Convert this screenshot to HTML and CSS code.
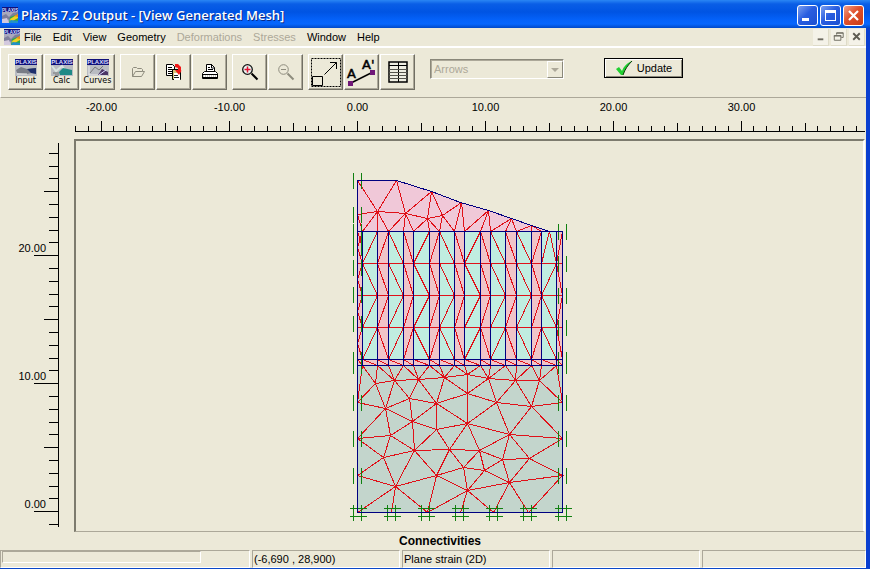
FILE: index.html
```html
<!DOCTYPE html>
<html lang="en">
<head>
<meta charset="utf-8">
<title>Plaxis 7.2 Output</title>
<link rel="stylesheet" href="styles.css">
</head>
<body>
<svg class="defs" aria-hidden="true">
  <defs>
    <symbol id="app" viewBox="0 0 16 16">
      <rect width="16" height="16" fill="#a9a9bd"/>
      <rect width="16" height="5" fill="#10107a"/>
      <text class="brand" x="8" y="4.500" text-anchor="middle" font-size="4.500">PLAXIS</text>
      <path d="M0 9l4-2 3 3 4-4 5-1v3l-7 4-9 2z" fill="#7d7d9c"/>
      <path d="M0 12l5-1 2 5H0z" fill="#d3c9de"/>
      <path d="M7 16l1-6 8-3v9z" fill="#2fa84a"/>
      <path d="M8 12l8-5v4l-7 4z" fill="#f0d022"/>
      <path d="M12 9l4-2v3z" fill="#f2841c"/>
      <path d="M7 16l2-3 7 1v2z" fill="#2190c8"/>
    </symbol>
    <symbol id="plx" viewBox="0 0 22 17">
      <rect width="22" height="17" fill="#b9bcc2"/>
      <rect width="22" height="6" fill="#10107a"/>
      <text class="brand" x="11" y="5.200" text-anchor="middle" font-size="6">PLAXIS</text>
    </symbol>
  </defs>
</svg>
<div class="window">
  <header class="titlebar">
    <svg class="appicon"><use href="#app"/></svg>
    <h1>Plaxis 7.2 Output - [View Generated Mesh]</h1>
    <button class="cap" aria-label="Minimize"><svg viewBox="0 0 19 19"><path d="M4 12h7v3H4z" fill="#fff"/></svg></button>
    <button class="cap" aria-label="Maximize"><svg viewBox="0 0 19 19"><path d="M4 4h11v11H4zM5 7v7h9V7z" fill="#fff" fill-rule="evenodd"/></svg></button>
    <button class="cap close" aria-label="Close"><svg viewBox="0 0 19 19"><path d="M5 5l9 9M14 5l-9 9" stroke="#fff" stroke-width="2.2"/></svg></button>
  </header>
  <nav class="menubar">
    <svg class="appicon"><use href="#app"/></svg>
    <button>File</button><button>Edit</button><button>View</button><button>Geometry</button><button disabled>Deformations</button><button disabled>Stresses</button><button>Window</button><button>Help</button>
    <span class="mdi">
      <button aria-label="Minimize view"><svg viewBox="0 0 16 16"><path d="M5 10h6v2H5z" fill="#6d6b60"/></svg></button>
      <button aria-label="Restore view"><svg viewBox="0 0 16 16"><path d="M6 6V4h7v5h-2M6 4.500h7M3.500 7h7v5h-7zM3 7.500h8" stroke="#6d6b60" fill="none"/></svg></button>
      <button aria-label="Close view"><svg viewBox="0 0 16 16"><path d="M4.500 4.500l7 7M11.500 4.500l-7 7" stroke="#5d5b52" stroke-width="2"/></svg></button>
    </span>
  </nav>
  <div class="toolbar">
    <div class="group">
      <button class="tool"><svg width="22" height="17"><use href="#plx"/><path d="M1 11l5-3 6 2 9-1v4l-9 2-10-1z" fill="#787c86"/><path d="M12 10l9-1v6l-5-1z" fill="#20306c"/><path d="M2 15h10" stroke="#e8e8e8"/></svg>Input</button>
      <button class="tool"><svg width="22" height="17"><use href="#plx"/><path d="M1 7l4 5 6-5 4 6" stroke="#d8e4e0" fill="none" stroke-width="2"/><path d="M8 13l4-4 9 2v5H9z" fill="#1f8a86"/><path d="M2 14h6M4 16h4" stroke="#777"/></svg>Calc</button>
      <button class="tool"><svg width="22" height="17"><use href="#plx"/><path d="M2 7v9h18" stroke="#eee" fill="none"/><path d="M3 14l5-6 4 3 4-4" stroke="#777" fill="none"/><path d="M11 16l4-6 6 3v3z" fill="#4b3565"/><path d="M12 16l7-5" stroke="#d8d8ff"/></svg>Curves</button>
    </div>
    <div class="group">
      <button class="tool" aria-label="Open" disabled><svg width="16" height="14" viewBox="0 0 16 14"><path d="M2.500 11.500h9l3-5h-2v-2l-1-1h-4l-1-1h-3l-1 1v8l3-5h7" stroke="#8e8c7e" fill="none"/></svg></button>
      <button class="tool" aria-label="Copy"><svg width="18" height="18" viewBox="0 0 18 18"><path d="M1.500 1.500h6l2 2v9h-8z" fill="#fff" stroke="#000"/><path d="M3 4.500h4M3 6.500h5M3 8.500h5M3 10.500h4" stroke="#000"/><path d="M7.500 6.500h8v10h-8z" fill="#d6c37a" stroke="#000"/><path d="M9 10h6v7H9z" fill="#fff"/><path d="M9 12.500h4M9 14.500h5" stroke="#222"/><path d="M10 1h3l3 3v4l1-1-3 5-4-5h3V5l-3-1z" fill="#f01818"/></svg></button>
      <button class="tool" aria-label="Print"><svg width="18" height="18" viewBox="0 0 18 18"><path d="M5.500 8.500v-7h5l3 3v4" fill="#fff" stroke="#000"/><path d="M10.500 1v4h3M7 4.500h2M7 6.500h5" stroke="#000" fill="none"/><path d="M3.500 8.500h11l2 2v5h-15v-5z" fill="#fff" stroke="#000"/><path d="M2 11.500h14M2 14.500h14M4 8.500h10" stroke="#000"/><path d="M2 13h14" stroke="#99988c" stroke-dasharray="1 1"/></svg></button>
    </div>
    <div class="group">
      <button class="tool" aria-label="Zoom in"><svg width="18" height="18" viewBox="0 0 18 18"><circle cx="6.500" cy="6.500" r="4.800" fill="#e8f4f0" stroke="#111" stroke-width="1.300"/><path d="M3.500 6.500h6M6.500 3.500v6" stroke="#e01030" stroke-width="1.500"/><path d="M10.500 10.500l6 6" stroke="#000" stroke-width="2"/></svg></button>
      <button class="tool" aria-label="Zoom out" disabled><svg width="18" height="18" viewBox="0 0 18 18"><circle cx="6.500" cy="6.500" r="4.800" fill="none" stroke="#8e8c7e"/><path d="M4 6.500h5" stroke="#8e8c7e"/><path d="M10.500 10.500l6 6" stroke="#8e8c7e" stroke-width="2"/></svg></button>
    </div>
    <div class="group">
      <button class="tool" aria-label="Scale"><svg width="30" height="29" viewBox="0 0 30 29"><path d="M.500 .500h29v28H.500z" fill="none" stroke="#000" stroke-dasharray="2 1"/><path d="M1.500 18.500h10v9h-10zM13.500 16.500l12-12M19 4.500h6.500V11" fill="none" stroke="#000"/></svg></button>
      <button class="tool" aria-label="Cross section"><svg class="section" width="30" height="29" viewBox="0 0 30 29"><text class="mark" x="0" y="20">A</text><text class="mark" x="15" y="11">A'</text><path d="M4 25l22-11" stroke="#000" stroke-width="1.500"/><path d="M1 23h5v5H1zM23 12h5v5h-5z" fill="#701878"/></svg></button>
      <button class="tool" aria-label="Table"><svg width="20" height="22" viewBox="0 0 20 22"><path d="M1 1h18v20H1z" fill="#efeee2" stroke="#000" stroke-width="1.500"/><path d="M1 4.500h18M10.500 1v20" stroke="#000"/><path d="M1 8.500h18M1 11.500h18M1 14.500h18M1 17.500h18" stroke="#55544c"/></svg></button>
    </div>
    <div class="combo">
      <select aria-label="Display type" disabled><option>Arrows</option></select><span class="drop"></span>
    </div>
    <button class="update"><svg width="18" height="16" viewBox="0 0 18 16"><path d="M1 9l3-2 3 4c2-5 5-8 10-10-4 4-7 8-9 14H6z" fill="#20d030"/><path d="M8 15c2-6 5-10 9-14" stroke="#083a08" fill="none"/></svg>Update</button>
  </div>
  <main class="workspace">
    <svg class="ruler-x" id="rulerX" role="img" aria-label="Horizontal ruler"></svg>
    <svg class="ruler-y" id="rulerY" role="img" aria-label="Vertical ruler"></svg>
    <div class="canvas"><svg id="mesh" role="img" aria-label="Generated mesh"></svg></div>
  </main>
  <p class="caption">Connectivities</p>
  <footer class="statusbar">
    <div class="cell"><span class="progress"></span></div>
    <div class="cell">(-6,690 , 28,900)</div>
    <div class="cell">Plane strain (2D)</div>
    <div class="cell"></div>
    <div class="cell"></div>
  </footer>
</div>
<script src="mesh.js"></script>
</body>
</html>
```
FILE: mesh.js
```js
const UNIT = 12.8;

// Rulers: one tick per metre, longer at 5, longest and labelled at 10.
function tickSize(n, sizes) {
  return n % 10 === 0 ? sizes[2] : n % 5 === 0 ? sizes[1] : sizes[0];
}

let out = '<line x1="1" y1="33.5" x2="100%" y2="33.5"/>';
for (let n = -22; n <= 39; n++) {
  const x = Math.floor(283 + n * UNIT) + 0.5;
  out += `<line x1="${x}" x2="${x}" y1="${33 - tickSize(n, [5, 8, 10])}" y2="33"/>`;
  if (n % 10 === 0) out += `<text x="${x}" y="13" text-anchor="middle">${n.toFixed(2)}</text>`;
}
document.getElementById('rulerX').innerHTML = out;

out = '<line x1="58.5" x2="58.5" y1="4" y2="388"/>';
for (let n = -1; n <= 28; n++) {
  const y = Math.floor(372.6 - n * UNIT) + 0.5;
  out += `<line x1="${58 - tickSize(n, [9, 14, 24])}" x2="58" y1="${y}" y2="${y}"/>`;
  if (n % 10 === 0) out += `<text x="46" y="${y - 4}" text-anchor="end">${n.toFixed(2)}</text>`;
}
document.getElementById('rulerY').innerHTML = out;

// Mesh
const xs = [357, 362, 377, 388, 403, 413, 429, 439, 454, 464, 480, 490, 505, 516, 531, 541, 556, 562];
const cols = xs.slice(1, 17);
const rows = [231, 263, 295, 327, 359, 365];
const seg = (a, b) => `M${a[0]} ${a[1]}L${b[0]} ${b[1]}`;

let fills = '<path fill="#f0c8d8" d="M357 180H396L431 191L460 202L488 210L511 218L549 231H357z"/>';
fills += '<path fill="#f0c4c8" d="M357 231H562V365H357z"/>';
for (let i = 0; i < 15; i += 2) {
  const w = cols[i + 1] - cols[i];
  fills += `<rect fill="#c0ede0" x="${cols[i]}" y="231" width="${w}" height="128"/>`;
}
fills += '<path fill="#c3d5cc" d="M357 365H562V512H357z"/>';

// Straight lines on the grid are one-pixel rectangles
let redBars = '';
for (const y of rows.slice(1, 4)) redBars += `<rect x="357" y="${y}" width="206" height="1"/>`;
let blueBars = '';
for (const x of cols) blueBars += `<rect x="${x}" y="231" width="1" height="135"/>`;
for (const y of [231, 359, 365, 512]) blueBars += `<rect x="357" y="${y}" width="206" height="1"/>`;
blueBars += '<rect x="357" y="180" width="1" height="333"/><rect x="562" y="231" width="1" height="282"/>';

// Which way each cell's diagonal leans, row by row
let red = '';
const lean = ['//\\\\//\\\\/\\\\\\\\/.', '\\\\\\\\\\\\\\\\\\\\\\\\\\\\/', '//////////////\\', '/\\//\\/\\\\/\\/\\\\/\\'];
lean.forEach((line, r) => {
  [...line].forEach((c, i) => {
    if (c === '.') return;
    const up = c === '/';
    red += seg([cols[up ? i + 1 : i], rows[r]], [cols[up ? i : i + 1], rows[r + 1]]);
  });
});
red += 'M541 263L549 231L556 263M562 231L556 263L562 295L556 327L562 359';
red += 'M357 231L362 247M362 231L357 247L362 263L357 279L362 295L357 311L362 327L357 343L362 359';
for (let i = 0; i < 17; i++) red += seg([xs[i], 359], [xs[i + 1], 365]);

const P = {
  h1: [377, 211], h2: [405, 213], h3: [427, 218], h4: [442, 215], t0: [357, 180], t1: [396, 180],
  t2: [431, 191], t3: [461, 202], t4: [488, 210], t5: [511, 218], t6: [531, 225], e0: [357, 214],
  A: [375, 383], B: [394, 380], C: [418, 379], D: [444, 377], E: [467, 374], F: [488, 378], G: [515, 380], H: [539, 380],
  I: [385, 408], J: [409, 398], K: [436, 403], L: [467, 393], M: [496, 402], N: [531, 406], O: [412, 421], P: [436, 429],
  Q: [467, 423], R: [509, 434], S: [390, 435], T: [383, 457], U: [414, 450], V: [449, 449], W: [479, 450], X: [502, 459],
  Y: [529, 458], Z: [463, 467], a: [484, 470], b: [436, 475], c: [395, 486], d: [467, 490], e: [509, 482],
  l1: [357, 402], l2: [357, 438], l3: [357, 475], l4: [357, 512], r1: [562, 402], r2: [562, 438], r3: [562, 475],
  b1: [391, 512], b2: [427, 512], b3: [460, 512], b4: [493, 512], b5: [528, 512]
};
const chains = `t0-h1-t1-h2-t2-h3 t2-h4-t3 e0-h1-h2-h3-h4
A-B-C-D-E-F-G-H l1-A-I-B-J-C-K-D-L-E L-F-M-G-N-H-r1 l1-I-J-K-L-M-N-r1
I-O-J O-K-P K-Q-L Q-M-R-N-r2-R-Q l2-I-S-l2-T-S-O-P-Q-V-P-U-O S-U-T-c-U-V-W-Q W-R-X-W-a-X-Y-R
r2-Y-r3-e-Y X-e-a-Z-W V-Z-b-V U-b-c-l3-T Z-d-a d-e d-b c-l4 b1-c-b2-b b2-d-b3 d-b4-e-b5-r3`;
for (const chain of chains.split(/\s+/)) {
  red += 'M' + chain.split('-').map(k => P[k].join(' ')).join('L');
}

// Nodes joined down to (or up from) the layer boundaries
const fan = (key, ends, y) => { for (const x of ends) red += seg(P[key], [x, y]); };
fan('e0', [362], 231);
fan('h1', [362, 377, 388], 231);
fan('h2', [388, 403, 413], 231);
fan('h3', [413, 429, 439], 231);
fan('h4', [439, 454], 231);
fan('t3', [454, 464], 231);
fan('t4', [464, 480, 490], 231);
fan('t5', [490, 505, 516], 231);
fan('t6', [516, 531, 541], 231);
fan('A', [362, 377], 365);
fan('B', [377, 388, 403], 365);
fan('C', [403, 413, 429], 365);
fan('D', [429, 439, 454], 365);
fan('E', [454, 464, 480], 365);
fan('F', [480, 490, 505], 365);
fan('G', [505, 516, 531], 365);
fan('H', [531, 541, 556], 365);
fan('l1', [362], 365);
fan('r1', [556], 365);

const slope = 'M357 180H396L431 191L460 202L488 210L511 218L531 225L549 231';

// Fixities
let green = '';
const vert = (x, list) => { for (const y of list) green += `M${x} ${y - 8}v16M${x + 8} ${y - 8}v16`; };
vert(353, [180, 214, 231, 247, 267, 294, 323, 359, 365, 402, 438, 475]);
vert(558, [231, 263, 295, 327, 359, 365, 402, 438, 475]);
for (const x of [357, 391, 425, 459, 493, 527, 562]) {
  green += `M${x - 4} 504v16M${x + 4} 504v16M${x - 8} 508h17M${x - 8} 516h17`;
}

document.getElementById('mesh').innerHTML =
  `<g transform="translate(-76 -141)">${fills}<g class="red">${redBars}</g></g>` +
  `<g transform="translate(-75.500 -140.500)" fill="none"><path class="elements" d="${red}"/>` +
  `<path class="fixities" d="${green}"/><path class="geometry" d="${slope}"/></g>` +
  `<g transform="translate(-76 -141)" class="blue">${blueBars}</g>`;
```
FILE: styles.css
```css
* { box-sizing: border-box; }
body {
  margin: 0;
  font: 11px/14px "Liberation Sans", Arial, sans-serif;
  color: #000;
  background: #ece9d8;
}
button { font: inherit; color: inherit; padding: 0; margin: 0; border: 0; background: none; }
svg { display: block; flex: none; }
.defs { position: absolute; width: 0; height: 0; }
.brand { font-family: "Liberation Sans", sans-serif; font-weight: bold; fill: #d8deff; }
.mark { font: 13px "DejaVu Sans", sans-serif; stroke: #000; stroke-width: 0.5px; }
.section { overflow: visible; }
.window {
  display: flex;
  flex-direction: column;
  height: 100vh;
  border-right: 4px solid #0a3fd0;
  border-bottom: 1px solid #0a48c8;
}
.titlebar {
  display: flex;
  align-items: center;
  gap: 2px;
  height: 28px;
  margin-right: -4px;
  padding: 2px 6px 0 2px;
  background: linear-gradient(#2a86f4 0, #0a5ee6 4px, #0054e3 12px, #0462fa 20px, #0666fd 24px, #0048c8 28px);
}
.appicon { width: 16px; height: 16px; }
.titlebar h1 {
  flex: 1;
  margin: 0 0 0 1px;
  font: 600 13px/18px "Open Sans", "Noto Sans", sans-serif;
  color: #fff;
  text-shadow: 1px 1px #0a2a86;
  white-space: nowrap;
}
.cap {
  width: 21px;
  height: 21px;
  border: 1px solid #fff;
  border-radius: 3px;
  background: linear-gradient(135deg, #7ba0f0, #2a5ee0 45%, #1c50d0);
}
.cap.close { background: linear-gradient(135deg, #f0a088, #e0502c 45%, #c83c14); }
.menubar {
  display: flex;
  align-items: center;
  gap: 11px;
  height: 20px;
  padding: 0 1px 0 4px;
  border-bottom: 2px solid #fff;
}
.menubar .appicon { margin-right: -7px; }
.menubar button:disabled { color: #aca899; }
.mdi { display: flex; gap: 2px; margin-left: auto; }
.mdi button { width: 16px; height: 17px; background: #f4f2e8; border-right: 1px solid #dedbc8; border-bottom: 1px solid #dedbc8; }
.toolbar {
  display: flex;
  align-items: flex-start;
  gap: 5px;
  height: 50px;
  padding: 6px 8px 0;
  border-left: 1px solid #fff;
  border-bottom: 1px solid #aca899;
}
.toolbar .group:first-child { margin-left: -1px; }
.group { display: flex; gap: 1px; }
.tool {
  display: flex;
  flex-direction: column;
  align-items: center;
  justify-content: center;
  width: 35px;
  height: 36px;
  font: 8px/10px "DejaVu Sans", sans-serif;
  border: 1px solid;
  border-color: #fff #716f64 #716f64 #fff;
  box-shadow: inset -1px -1px #aca899;
}
.combo {
  position: relative;
  width: 134px;
  height: 20px;
  margin: 5px 35px 0 10px;
  border: 1px solid;
  border-color: #8a887a #fff #fff #8a887a;
  box-shadow: inset 1px 1px #aca899;
}
.combo select {
  appearance: none;
  width: 100%;
  height: 18px;
  padding: 0 0 0 3px;
  border: 0;
  font: inherit;
  color: #aca899;
  opacity: 1;
  background: transparent;
}
.drop {
  position: absolute;
  top: 1px;
  right: 0;
  width: 16px;
  height: 17px;
  border: 1px solid;
  border-color: #fff #8a887a #8a887a #fff;
  background: #ece9d8;
  pointer-events: none;
}
.drop::after {
  content: "";
  display: block;
  width: 0;
  margin: 6px 0 0 3px;
  border: 4px solid transparent;
  border-top-color: #aca899;
  border-bottom: 0;
}
.update {
  display: flex;
  align-items: center;
  justify-content: center;
  gap: 4px;
  width: 79px;
  height: 20px;
  margin-top: 4px;
  border: 1px solid #000;
  box-shadow: inset 1px 1px #fff, inset -1px -1px #8a887a;
}
.workspace {
  flex: 1;
  display: grid;
  grid-template-columns: 74px 1fr;
  grid-template-rows: 41px 1fr;
  min-height: 0;
  padding-right: 1px;
}
.ruler-x, .ruler-y { width: 100%; height: 100%; shape-rendering: crispEdges; }
.ruler-x { grid-area: 1 / 2; }
.ruler-y { grid-area: 2 / 1; }
.ruler-x line, .ruler-y line { stroke: #000; }
.canvas {
  grid-area: 2 / 2;
  min-width: 0;
  min-height: 0;
  overflow: hidden;
  border: 2px solid;
  border-color: #7d7b6e #fff #fff #7d7b6e;
  border-bottom: 1px solid #aca899;
}
.canvas svg { width: 100%; height: 100%; shape-rendering: crispEdges; }
.elements { stroke: #e01018; }
.fixities { stroke: #108010; }
.geometry { stroke: #000080; }
.red { fill: #e01018; }
.blue { fill: #000080; }
.caption {
  margin: 0;
  padding: 1px 0 0 14px;
  font-size: 12px;
  line-height: 17px;
  font-weight: bold;
  text-align: center;
}
.statusbar {
  display: grid;
  grid-template-columns: 250px 148px 148px 148px 1fr;
  gap: 2px;
  height: 18px;
}
.cell {
  padding: 0 0 0 1px;
  line-height: 16px;
  white-space: nowrap;
  border: 1px solid;
  border-color: #aca899 #fff #fff #aca899;
}
.progress {
  display: block;
  width: 199px;
  height: 12px;
  border: 1px solid;
  border-color: #aca899 #fff #fff #aca899;
}
```
